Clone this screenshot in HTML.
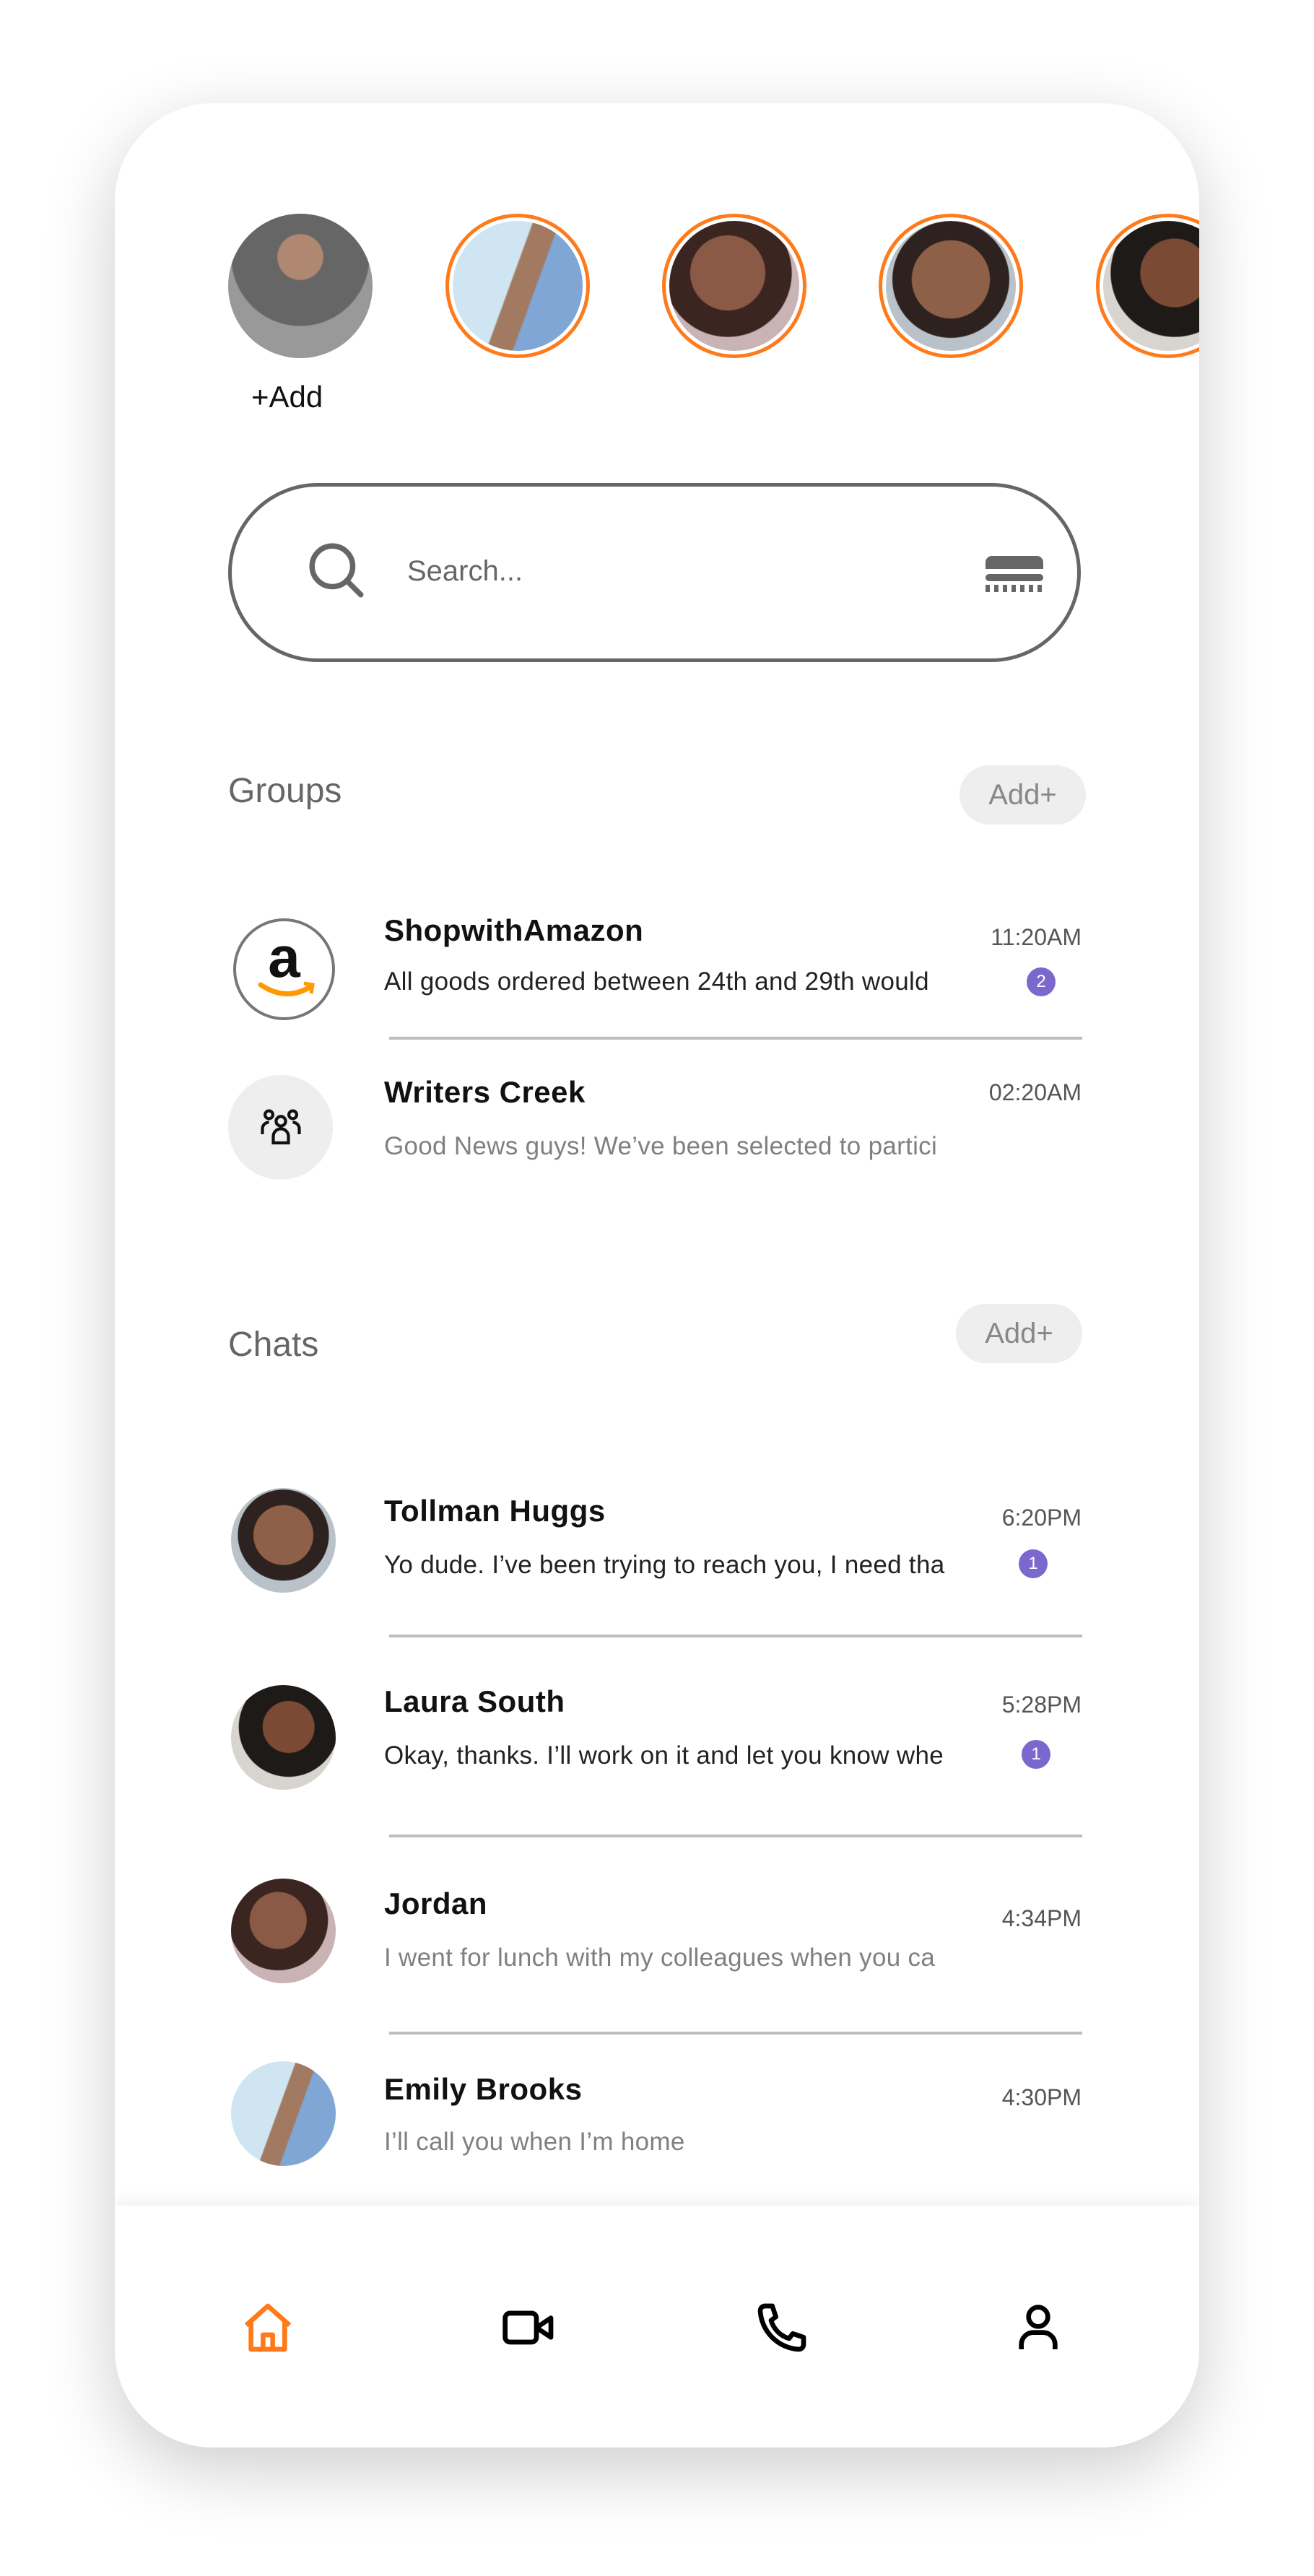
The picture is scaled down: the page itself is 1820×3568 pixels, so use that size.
<!DOCTYPE html>
<html><head><meta charset="utf-8"><style>
*{margin:0;padding:0;box-sizing:border-box}
body{width:1820px;height:3568px;background:#fff;position:relative;overflow:hidden;font-family:"Liberation Sans",sans-serif}
.card{position:absolute;left:159px;top:143px;width:1502px;height:3247px;background:#fff;border-radius:136px;box-shadow:0 30px 100px rgba(0,0,0,0.2);overflow:hidden}
.a{position:absolute}
.st{position:absolute;width:200px;height:200px;border-radius:50%;border:5px solid #ff7a1a;padding:5px;top:153px}
.st div{width:100%;height:100%;border-radius:50%}
.name{position:absolute;font-weight:bold;font-size:42px;color:#111;left:373px;letter-spacing:0.5px}
.msg{position:absolute;font-size:35px;color:#222;left:373px;white-space:nowrap;letter-spacing:0.3px}
.msg.g{color:#808080}
.time{position:absolute;font-size:32px;color:#555;right:163px}
.badge{position:absolute;width:40px;height:40px;border-radius:50%;background:#7b68cc;color:#fff;font-size:24px;text-align:center;line-height:40px}
.div{position:absolute;left:380px;width:960px;height:4px;background:#bdbdbd}
.av{position:absolute;width:145px;height:145px;border-radius:50%}
.sec{position:absolute;left:157px;font-size:48px;color:#666}
.pill{position:absolute;width:175px;height:82px;border-radius:41px;background:#eee;color:#888;font-size:40px;text-align:center;line-height:82px}
</style></head><body>
<div class="card">
 <div class="a" style="left:157px;top:153px;width:200px;height:200px;border-radius:50%;background:radial-gradient(circle at 50% 30%,#b08770 0 18%,#666 19% 55%,#999 56%)"></div>
 <div class="a" style="left:189px;top:383px;font-size:42px;color:#111">+Add</div>
 <div class="st" style="left:458px"><div style="background:linear-gradient(110deg,#cfe6f2 0 45%,#a27a62 46% 60%,#7fa6d4 61%)"></div></div>
 <div class="st" style="left:758px"><div style="background:radial-gradient(circle at 45% 40%,#8a5a46 0 35%,#3b2520 36% 60%,#c9b3b5 61%)"></div></div>
 <div class="st" style="left:1058px"><div style="background:radial-gradient(circle at 50% 45%,#8f6048 0 40%,#2d2220 41% 60%,#b8c2c8 61%)"></div></div>
 <div class="st" style="left:1359px"><div style="background:radial-gradient(circle at 55% 40%,#7a4a35 0 32%,#1d1a18 33% 60%,#d8d4d0 61%)"></div></div>

 <div class="a" style="left:157px;top:526px;width:1181px;height:248px;border:5px solid #666;border-radius:124px"></div>
 <svg class="a" style="left:262px;top:602px" width="90" height="90" viewBox="0 0 24 24" fill="none" stroke="#666" stroke-width="2"><circle cx="10.5" cy="10.5" r="7.5"/><path d="M16 16l5 5" stroke-linecap="round"/></svg>
 <div class="a" style="left:405px;top:626px;font-size:40px;color:#666">Search...</div>
 <div class="a" style="left:1206px;top:627px;width:80px;height:18px;background:#666;border-radius:9px 9px 0 0"></div>
 <div class="a" style="left:1206px;top:652px;width:80px;height:10px;background:#666;border-radius:5px"></div>
 <div class="a" style="left:1206px;top:667px;width:80px;height:10px;background:repeating-linear-gradient(90deg,#666 0 6px,#fff 6px 12px)"></div>

 <div class="sec" style="top:925px">Groups</div>
 <div class="pill" style="left:1170px;top:917px">Add+</div>

 <div class="a" style="left:164px;top:1129px;width:141px;height:141px;border-radius:50%;border:4px solid #777;text-align:center">
  <div style="font-size:80px;font-weight:bold;color:#111;line-height:100px">a</div>
  <svg class="a" style="left:30px;top:82px" width="80" height="30" viewBox="0 0 80 30"><path d="M4 6 Q40 30 74 8" stroke="#f90" stroke-width="7" fill="none" stroke-linecap="round"/><path d="M64 4 L76 6 L74 18" stroke="#f90" stroke-width="5" fill="none"/></svg>
 </div>
 <div class="name" style="top:1122px">ShopwithAmazon</div>
 <div class="time" style="top:1137px">11:20AM</div>
 <div class="msg" style="top:1197px">All goods ordered between 24th and 29th would</div>
 <div class="badge" style="left:1263px;top:1197px">2</div>
 <div class="div" style="top:1293px"></div>

 <div class="av" style="left:157px;top:1346px;background:#eee"></div>
 <svg class="a" style="left:194px;top:1383px" width="72" height="72" viewBox="0 0 24 24" fill="none" stroke="#111" stroke-width="1.4"><circle cx="12" cy="9" r="2.2"/><path d="M8.5 19v-3a3.5 3.5 0 0 1 7 0v3z"/><circle cx="6.5" cy="6" r="1.8"/><circle cx="17.5" cy="6" r="1.8"/><path d="M3.5 15v-2.5a3 3 0 0 1 3-3M20.5 15v-2.5a3 3 0 0 0-3-3"/></svg>
 <div class="name" style="top:1346px">Writers Creek</div>
 <div class="time" style="top:1352px">02:20AM</div>
 <div class="msg g" style="top:1425px">Good News guys! We’ve been selected to partici</div>

 <div class="sec" style="top:1692px">Chats</div>
 <div class="pill" style="left:1165px;top:1663px">Add+</div>

 <div class="av" style="left:161px;top:1918px;background:radial-gradient(circle at 50% 45%,#8f6048 0 38%,#2d2220 39% 58%,#b8c2c8 59%)"></div>
 <div class="name" style="top:1926px">Tollman Huggs</div>
 <div class="time" style="top:1941px">6:20PM</div>
 <div class="msg" style="top:2005px">Yo dude. I’ve been trying to reach you, I need tha</div>
 <div class="badge" style="left:1252px;top:2003px">1</div>
 <div class="div" style="top:2121px"></div>

 <div class="av" style="left:161px;top:2191px;background:radial-gradient(circle at 55% 40%,#7a4a35 0 30%,#1d1a18 31% 58%,#d8d4d0 59%)"></div>
 <div class="name" style="top:2190px">Laura South</div>
 <div class="time" style="top:2200px">5:28PM</div>
 <div class="msg" style="top:2269px">Okay, thanks. I’ll work on it and let you know whe</div>
 <div class="badge" style="left:1256px;top:2267px">1</div>
 <div class="div" style="top:2398px"></div>

 <div class="av" style="left:161px;top:2459px;background:radial-gradient(circle at 45% 40%,#8a5a46 0 33%,#3b2520 34% 58%,#c9b3b5 59%)"></div>
 <div class="name" style="top:2470px">Jordan</div>
 <div class="time" style="top:2496px">4:34PM</div>
 <div class="msg g" style="top:2549px">I went for lunch with my colleagues when you ca</div>
 <div class="div" style="top:2671px"></div>

 <div class="av" style="left:161px;top:2712px;background:linear-gradient(110deg,#cfe6f2 0 45%,#a27a62 46% 60%,#7fa6d4 61%)"></div>
 <div class="name" style="top:2727px">Emily Brooks</div>
 <div class="time" style="top:2744px">4:30PM</div>
 <div class="msg g" style="top:2804px">I’ll call you when I’m home</div>

 <div class="a" style="left:0;top:2912px;width:1502px;height:340px;background:#fff;box-shadow:0 -8px 20px rgba(0,0,0,0.06)"></div>
 <svg class="a" style="left:172px;top:3041px" width="80" height="80" viewBox="0 0 24 24" fill="none" stroke="#ff7a1a" stroke-width="2" stroke-linejoin="round"><path d="M3 11L12 3l9 8M5 9.5V21h14V9.5"/><path d="M10 21v-6h4v6"/></svg>
 <svg class="a" style="left:534px;top:3041px" width="80" height="80" viewBox="0 0 24 24" fill="none" stroke="#000" stroke-width="2" stroke-linejoin="round"><rect x="2" y="6" width="13" height="12" rx="2"/><path d="M15 12l6-4v8z"/></svg>
 <svg class="a" style="left:884px;top:3041px" width="80" height="80" viewBox="0 0 24 24" fill="none" stroke="#000" stroke-width="2" stroke-linejoin="round"><path d="M5 3h3l1.5 4.5-2 1.5a11 11 0 0 0 7.5 7.5l1.5-2 4.5 1.5v3a2 2 0 0 1-2 2A17 17 0 0 1 3 5a2 2 0 0 1 2-2z"/></svg>
 <svg class="a" style="left:1239px;top:3041px" width="80" height="80" viewBox="0 0 24 24" fill="none" stroke="#000" stroke-width="2"><circle cx="12" cy="7.5" r="4"/><path d="M5 21v-2a5 5 0 0 1 5-5h4a5 5 0 0 1 5 5v2"/></svg>
</div>
</body></html>
